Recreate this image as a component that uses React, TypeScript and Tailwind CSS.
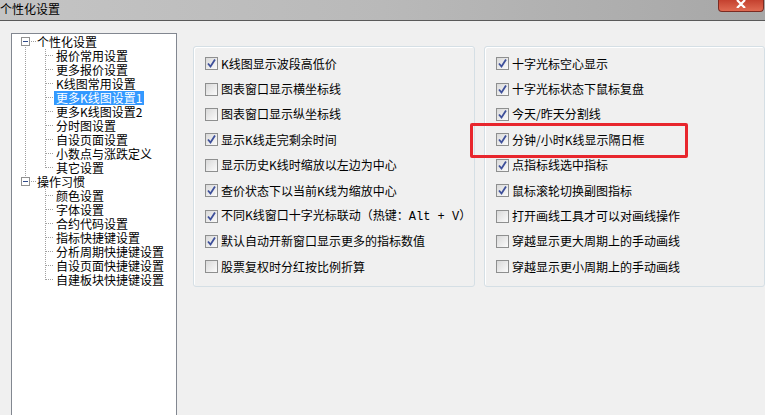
import React from "react"

const font = { fontFamily: '"Noto Sans CJK SC", "Liberation Sans", sans-serif' }

type Node = { label: string; children: string[] }

const tree: Node[] = [
  {
    label: "个性化设置",
    children: [
      "报价常用设置",
      "更多报价设置",
      "K线图常用设置",
      "更多K线图设置1",
      "更多K线图设置2",
      "分时图设置",
      "自设页面设置",
      "小数点与涨跌定义",
      "其它设置",
    ],
  },
  {
    label: "操作习惯",
    children: [
      "颜色设置",
      "字体设置",
      "合约代码设置",
      "指标快捷键设置",
      "分析周期快捷键设置",
      "自设页面快捷键设置",
      "自建板块快捷键设置",
    ],
  },
]

const leftOpts: [string, boolean][] = [
  ["K线图显示波段高低价", true],
  ["图表窗口显示横坐标线", false],
  ["图表窗口显示纵坐标线", false],
  ["显示K线走完剩余时间", true],
  ["显示历史K线时缩放以左边为中心", false],
  ["查价状态下以当前K线为缩放中心", true],
  ["HOTKEY", true],
  ["默认自动开新窗口显示更多的指标数值", true],
  ["股票复权时分红按比例折算", false],
]

const rightOpts: [string, boolean][] = [
  ["十字光标空心显示", true],
  ["十字光标状态下鼠标复盘", true],
  ["今天/昨天分割线", true],
  ["分钟/小时K线显示隔日框", true],
  ["点指标线选中指标", true],
  ["鼠标滚轮切换副图指标", true],
  ["打开画线工具才可以对画线操作", false],
  ["穿越显示更大周期上的手动画线", false],
  ["穿越显示更小周期上的手动画线", false],
]

function RootGutter({ first, last }: { first: boolean; last: boolean }) {
  return (
    <svg width="25" height="14" className="shrink-0">
      {!first && <line x1="13.5" y1="0" x2="13.5" y2="2" stroke="#a0a0a0" strokeDasharray="1 1" />}
      {!last && <line x1="13.5" y1="12" x2="13.5" y2="14" stroke="#a0a0a0" strokeDasharray="1 1" />}
      <rect x="9.5" y="2.5" width="8" height="8" fill="#fff" stroke="#919191" />
      <line x1="11" y1="6.5" x2="16" y2="6.5" stroke="#2f4a8a" />
      <line x1="19" y1="6.5" x2="25" y2="6.5" stroke="#a0a0a0" strokeDasharray="1 1" />
    </svg>
  )
}

function ChildGutter({ lastRoot, lastChild }: { lastRoot: boolean; lastChild: boolean }) {
  return (
    <svg width="42" height="14" className="shrink-0">
      {!lastRoot && <line x1="13.5" y1="0" x2="13.5" y2="14" stroke="#a0a0a0" strokeDasharray="1 1" />}
      <line x1="33.5" y1="0" x2="33.5" y2={lastChild ? 7 : 14} stroke="#a0a0a0" strokeDasharray="1 1" />
      <line x1="34" y1="6.5" x2="43" y2="6.5" stroke="#a0a0a0" strokeDasharray="1 1" />
    </svg>
  )
}

function CheckBox({ checked }: { checked: boolean }) {
  return (
    <div className="w-[13px] h-[13px] shrink-0 border border-[#8e8f8f] bg-gradient-to-br from-[#d9d9d9] to-[#fbfbfb] flex items-center justify-center">
      {checked && (
        <svg width="11" height="11" viewBox="0 0 11 11">
          <path d="M2 5.5 L4.5 8.5 L9 1.5" fill="none" stroke="#3d4f9a" strokeWidth="1.8" />
        </svg>
      )}
    </div>
  )
}

function Label({ text }: { text: string }) {
  if (text === "HOTKEY") {
    return (
      <span className="inline-block leading-[16px]">
        不同K线窗口十字光标联动（热键：
        <span style={{ fontFamily: '"Liberation Mono", monospace' }}>Alt + V</span>）
      </span>
    )
  }
  return <span className="inline-block leading-[16px]">{text}</span>
}

function Group({ opts }: { opts: [string, boolean][] }) {
  return (
    <div className="h-[241px] border border-[#d5dfe5] rounded-[3px] shadow-[inset_1px_1px_0_#fff] pt-[4px] pl-[11px]">
      {opts.map(([t, c]) => (
        <div key={t} className="h-[25.4px] flex items-center gap-[3px] text-[12px] text-black">
          <CheckBox checked={c} />
          <Label text={t} />
        </div>
      ))}
    </div>
  )
}

export default function App() {
  return (
    <div className="w-[765px] h-[415px] overflow-hidden bg-[#f0f0f0] flex flex-col relative" style={font}>
      <div className="h-[21px] shrink-0 border-b border-[#5a5a5a] bg-gradient-to-r from-[#c4c4c4] via-[#b9b9b9] to-[#a7a7a7] flex items-start justify-between">
        <span className="inline-block text-[12px] leading-[17px] text-black">个性化设置</span>
        <div className="w-[46px] h-[12px] mr-[1px] rounded-b-[4px] border border-t-0 border-[#7b2b22] bg-gradient-to-b from-[#c4412f] to-[#e06a52] flex items-start justify-center">
          <svg width="10" height="8" viewBox="0 0 10 8">
            <path d="M1 0 L5 4 L9 0 M1 8 L5 4 L9 8" stroke="#fff" strokeWidth="2.2" fill="none" />
          </svg>
        </div>
      </div>

      <div className="flex flex-1 pl-[11px] pt-[12px]">
        <div className="w-[166px] h-[420px] shrink-0 bg-white border border-b-0 border-[#828790] pt-[1px] text-[12px] text-black">
          {tree.map((n, ri) => (
            <div key={n.label}>
              <div className="h-[14px] flex items-center">
                <RootGutter first={ri === 0} last={ri === tree.length - 1} />
                <span className="inline-block h-[14px] leading-[14px] px-[2px] -ml-[2px]">{n.label}</span>
              </div>
              {n.children.map((c, ci) => (
                <div key={c} className="h-[14px] flex items-center">
                  <ChildGutter lastRoot={ri === tree.length - 1} lastChild={ci === n.children.length - 1} />
                  <span
                    className={
                      c === "更多K线图设置1"
                        ? "inline-block h-[14px] leading-[14px] px-[2px] bg-[#3399ff] text-white"
                        : "inline-block h-[14px] leading-[14px] px-[2px]"
                    }
                  >
                    {c}
                  </span>
                </div>
              ))}
            </div>
          ))}
        </div>

        <div className="flex gap-[9px] ml-[16px] mt-[13px]">
          <div className="w-[282px]">
            <Group opts={leftOpts} />
          </div>
          <div className="w-[281px]">
            <Group opts={rightOpts} />
          </div>
        </div>
      </div>

      <div className="absolute left-[470px] top-[123px] w-[218px] h-[35px] border-[3px] border-[#e8262d] rounded-[2px]" />
    </div>
  )
}
